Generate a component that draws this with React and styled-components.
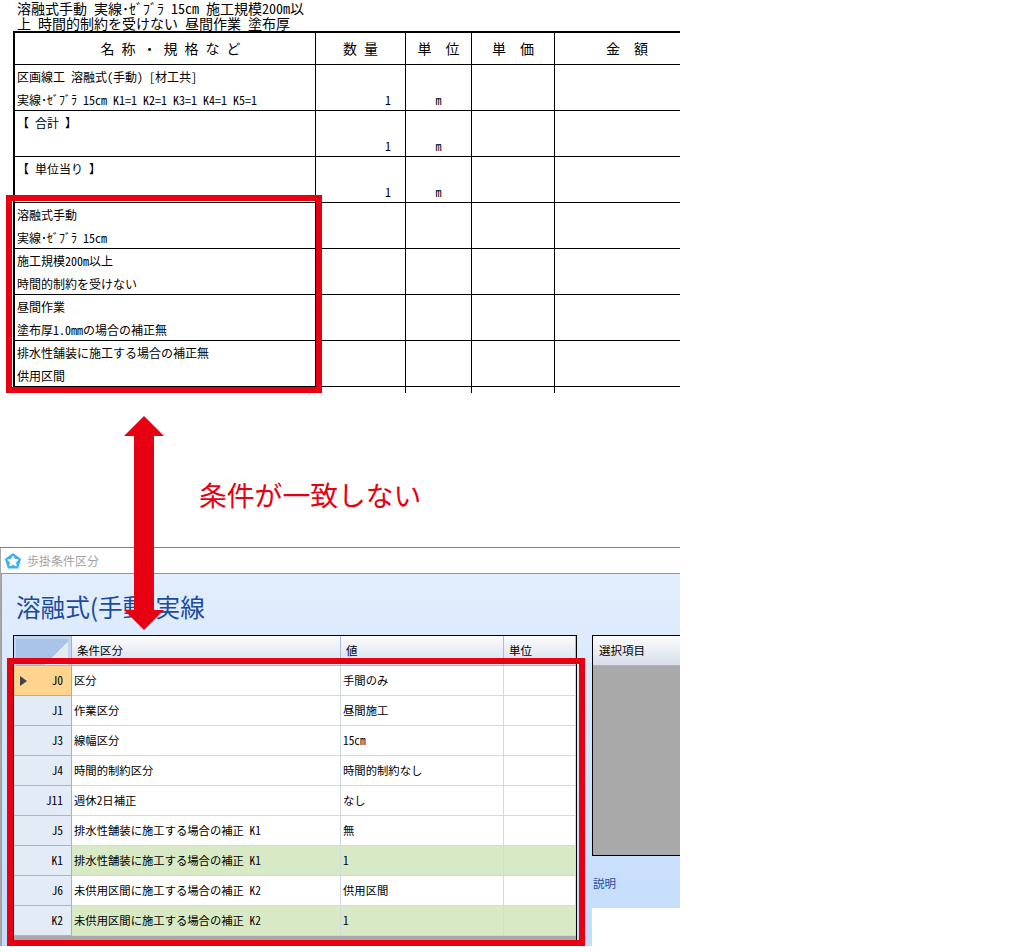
import React from "react";
import styled, { createGlobalStyle } from "styled-components";

const Global = createGlobalStyle`
  html, body { margin: 0; padding: 0; background: #fff; }
  body { font-family: "Noto Sans CJK JP", "Noto Sans", sans-serif; font-feature-settings: "hwid"; color: #000; }
`;

const Page = styled.div`
  position: relative;
  width: 680px;
  height: 946px;
  overflow: hidden;
`;

const Caption = styled.div`
  padding: 1px 0 0 17px;
  font-size: 14px;
  line-height: 15px;
  height: 30px;
  white-space: pre;
`;

const Sheet = styled.div`
  position: relative;
  margin-left: 13px;
  height: 362px;
  overflow: hidden;
  border-top: 2px solid #000;
  box-sizing: border-box;
  border-left: 2px solid #000;
  width: 687px;
`;

const SheetRow = styled.div`
  display: grid;
  grid-template-columns: 301px 90px 66px 83px 145px;
  height: ${(p) => p.$h}px;
  box-sizing: border-box;
`;

const SheetCell = styled.div`
  box-sizing: border-box;
  border-right: 1px solid #000;
  border-bottom: ${(p) => (p.$open ? "none" : "1px solid #000")};
  font-size: 12px;
  line-height: 23px;
  padding: ${(p) => (p.$pad ? "0 2px" : "0")};
  white-space: pre;
  overflow: hidden;
`;

const HeadCell = styled(SheetCell)`
  font-size: 14px;
  line-height: 31px;
  text-align: center;
  padding-left: ${(p) => p.$shift || 0}px;
`;

const Value = styled.div`
  margin-top: 23px;
  text-align: ${(p) => p.$align};
  padding-right: ${(p) => (p.$align === "right" ? 14 : 0)}px;
`;

const Middle = styled.div`
  height: 154px;
  padding: 81px 0 0 199px;
  box-sizing: border-box;
  font-size: 27.8px;
  line-height: 40px;
  color: #e60012;
  white-space: nowrap;
`;

const Win = styled.div`
  box-sizing: border-box;
  height: 399px;
  border-top: 1px solid #808080;
  border-left: 1px solid #a8a8a8;
  display: flex;
  flex-direction: column;
  overflow: hidden;
`;

const TitleBar = styled.div`
  height: 25px;
  flex: none;
  display: flex;
  align-items: center;
  gap: 5px;
  padding-left: 3px;
  background: #fff;
  border-bottom: 1px solid #7a9bc8;
  font-size: 12px;
  color: #a3a3a3;
`;

const Body = styled.div`
  flex: 1;
  min-height: 0;
  margin-left: -1px;
  border-left: 2px solid #7fa3d6;
  background: linear-gradient(#e2eefd, #c3dcfc);
  display: flex;
  flex-direction: column;
`;

const Heading = styled.div`
  height: 61px;
  flex: none;
  box-sizing: border-box;
  padding: 14px 0 0 14px;
  font-size: 24.6px;
  line-height: 36px;
  color: #1b4c9c;
  white-space: nowrap;
  font-feature-settings: normal;
`;

const Content = styled.div`
  flex: 1;
  min-height: 0;
  display: flex;
  padding-left: 11px;
  gap: 15px;
`;

const GridBox = styled.div`
  width: 564px;
  flex: none;
  box-sizing: border-box;
  border: 1px solid #000;
  border-bottom: none;
  background: #a9a9a9;
  overflow: hidden;
`;

const COLS = "58px 269px 163px 72px";

const GridHead = styled.div`
  display: grid;
  grid-template-columns: ${COLS};
  height: 30px;
  box-sizing: border-box;
`;

const Corner = styled.div`
  border-right: 1px solid #9db6d6;
  border-bottom: 1px solid #9db6d6;
  box-sizing: border-box;
  background: #a9c4e8 linear-gradient(135deg, #a9c4e8 72%, #e6eaf1 72%) no-repeat;
  background-size: calc(100% - 3px) 100%;
  box-shadow: inset 2px 3px 0 #c3d5ee, inset -3px 0 0 #c3d5ee;
`;

const HeadLabel = styled.div`
  box-sizing: border-box;
  border-right: 1px solid #a8bcd6;
  border-bottom: 1px solid #9db6d6;
  background: linear-gradient(#fbfcfe, #d8deea);
  font-size: 11.5px;
  line-height: 29px;
  padding-left: 5px;
`;

const GridRow = styled.div`
  display: grid;
  grid-template-columns: ${COLS};
  height: 30px;
  box-sizing: border-box;
`;

const RowHead = styled.div`
  box-sizing: border-box;
  background: ${(p) => (p.$active ? "#ffd48f" : "#e3ebf7")};
  border-right: 1px solid ${(p) => (p.$active ? "#f0a040" : "#9db6d6")};
  border-bottom: 1px solid ${(p) => (p.$active ? "#f0a040" : "#9db6d6")};
  font-size: 11.5px;
  line-height: 29px;
  padding: 0 8px 0 6px;
  display: flex;
  align-items: center;
  justify-content: space-between;
`;

const Pointer = styled.svg`
  width: 7px;
  height: 10px;
  flex: none;
`;

const RowCode = styled.span`
  margin-left: auto;
`;

const GridCell = styled.div`
  box-sizing: border-box;
  background: ${(p) => (p.$green ? "#d8eac5" : "#fff")};
  border-right: 1px solid #d2dae6;
  border-bottom: 1px solid #cfd8e3;
  font-size: 11.33px;
  line-height: 29px;
  padding-left: 2px;
  white-space: pre;
  overflow: hidden;
`;

const Side = styled.div`
  flex: 1;
  min-width: 0;
  display: flex;
  flex-direction: column;
`;

const ChoiceBox = styled.div`
  box-sizing: border-box;
  height: 221px;
  flex: none;
  border-left: 1px solid #000;
  border-top: 1px solid #000;
  border-bottom: 1px solid #000;
  background: #a9a9a9;
`;

const ChoiceHead = styled.div`
  height: 30px;
  box-sizing: border-box;
  border-bottom: 1px solid #9db6d6;
  background: linear-gradient(#fbfcfe, #d8deea);
  font-size: 11.5px;
  line-height: 29px;
  padding-left: 6px;
`;

const HelpLabel = styled.div`
  height: 52px;
  flex: none;
  box-sizing: border-box;
  padding: 19px 0 0 1px;
  font-size: 11.5px;
  line-height: 17px;
  color: #1b4c9c;
`;

const HelpBox = styled.div`
  flex: 1;
  background: #fff;
`;

const Frame = styled.div`
  position: absolute;
  box-sizing: border-box;
  left: ${(p) => p.$x}px;
  top: ${(p) => p.$y}px;
  width: ${(p) => p.$w}px;
  height: ${(p) => p.$h}px;
  border: 6px solid #e60012;
  pointer-events: none;
`;

const BigArrow = styled.svg`
  position: absolute;
  left: 124px;
  top: 416px;
  width: 40px;
  height: 214px;
`;

const sheetRows = [
  ["区画線工 溶融式(手動) [材工共]", "実線･ｾﾞﾌﾞﾗ 15cm K1=1 K2=1 K3=1 K4=1 K5=1", true],
  ["【 合計 】", "", true],
  ["【 単位当り 】", "", true],
  ["溶融式手動", "実線･ｾﾞﾌﾞﾗ 15cm"],
  ["施工規模200m以上", "時間的制約を受けない"],
  ["昼間作業", "塗布厚1.0mmの場合の補正無"],
  ["排水性舗装に施工する場合の補正無", "供用区間"],
];

const gridRows = [
  ["J0", "区分", "手間のみ"],
  ["J1", "作業区分", "昼間施工"],
  ["J3", "線幅区分", "15cm"],
  ["J4", "時間的制約区分", "時間的制約なし"],
  ["J11", "週休2日補正", "なし"],
  ["J5", "排水性舗装に施工する場合の補正 K1", "無"],
  ["K1", "排水性舗装に施工する場合の補正 K1", "1", true],
  ["J6", "未供用区間に施工する場合の補正 K2", "供用区間"],
  ["K2", "未供用区間に施工する場合の補正 K2", "1", true],
];

export default function App() {
  return (
    <>
      <Global />
      <Page>
        <Caption>
          {"溶融式手動 実線･ｾﾞﾌﾞﾗ 15cm 施工規模200m以\n上 時間的制約を受けない 昼間作業 塗布厚"}
        </Caption>
        <Sheet>
          <SheetRow $h={32}>
            <HeadCell $shift={11}>名 称 ・ 規 格 な ど</HeadCell>
            <HeadCell>数 量</HeadCell>
            <HeadCell>単  位</HeadCell>
            <HeadCell>単  価</HeadCell>
            <HeadCell>金  額</HeadCell>
          </SheetRow>
          {sheetRows.map(([a, b, priced]) => (
            <SheetRow $h={46} key={a}>
              <SheetCell $pad>
                {a}
                {"\n"}
                {b}
              </SheetCell>
              <SheetCell>{priced && <Value $align="right">1</Value>}</SheetCell>
              <SheetCell>{priced && <Value $align="center">m</Value>}</SheetCell>
              <SheetCell />
              <SheetCell />
            </SheetRow>
          ))}
          <SheetRow $h={6}>
            <SheetCell $open />
            <SheetCell $open />
            <SheetCell $open />
            <SheetCell $open />
            <SheetCell $open />
          </SheetRow>
        </Sheet>
        <Middle>条件が一致しない</Middle>
        <Win>
          <TitleBar>
            <svg width="18" height="18" viewBox="0 0 18 18">
              <polygon
                points="9,2.2 16,7.3 13.3,15.6 4.7,15.6 2,7.3"
                fill="#3fb0ee"
                stroke="#3fb0ee"
                strokeWidth="2"
                strokeLinejoin="round"
              />
              <polygon
                points="9,4.2 10.6,7.4 14.2,7.9 11.6,10.4 12.2,13.9 9,12.3 5.8,13.9 6.4,10.4 3.8,7.9 7.4,7.4"
                fill="#fff"
                stroke="#fff"
                strokeWidth="1"
                strokeLinejoin="round"
              />
            </svg>
            歩掛条件区分
          </TitleBar>
          <Body>
            <Heading>溶融式(手動)実線</Heading>
            <Content>
              <GridBox>
                <GridHead>
                  <Corner />
                  <HeadLabel>条件区分</HeadLabel>
                  <HeadLabel>値</HeadLabel>
                  <HeadLabel>単位</HeadLabel>
                </GridHead>
                {gridRows.map(([code, name, val, green], i) => (
                  <GridRow key={code}>
                    <RowHead $active={i === 0}>
                      {i === 0 && (
                        <Pointer viewBox="0 0 7 10">
                          <polygon points="0,0 7,5 0,10" fill="#444" />
                        </Pointer>
                      )}
                      <RowCode>{code}</RowCode>
                    </RowHead>
                    <GridCell $green={green}>{name}</GridCell>
                    <GridCell $green={green}>{val}</GridCell>
                    <GridCell $green={green} />
                  </GridRow>
                ))}
              </GridBox>
              <Side>
                <ChoiceBox>
                  <ChoiceHead>選択項目</ChoiceHead>
                </ChoiceBox>
                <HelpLabel>説明</HelpLabel>
                <HelpBox />
              </Side>
            </Content>
          </Body>
        </Win>
        <Frame $x={6} $y={195} $w={316} $h={198} />
        <Frame $x={7} $y={658} $w={578} $h={288} />
        <BigArrow viewBox="0 0 40 214">
          <polygon points="20,0 40,20 30,20 30,194 40,194 20,214 0,194 10,194 10,20 0,20" fill="#e60012" />
        </BigArrow>
      </Page>
    </>
  );
}
